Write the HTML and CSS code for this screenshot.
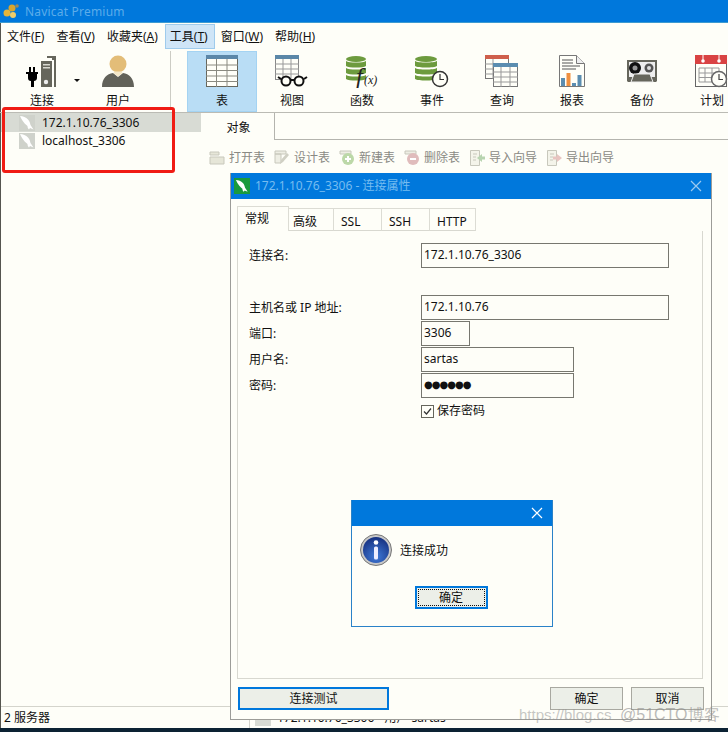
FILE: index.html
```html
<!DOCTYPE html>
<html lang="zh">
<head>
<meta charset="utf-8">
<title>Navicat Premium</title>
<link rel="stylesheet" href="styles.css">
</head>
<body>
<svg class="defs" width="0" height="0">
  <symbol id="dolphin" viewBox="0 0 16 16"><path d="M1 1c3 .2 6 1.300 8 3.500 1.500 1.600 2 3.500 2.500 5.500l3 4.500-3.500-1.500-1 1.500c-1-1-1.500-2-1.500-3.500C6.500 9.500 3.500 6.500 1 1z"/></symbol>
</svg>
<div class="app">
  <header class="titlebar">
    <svg class="app-logo" width="16" height="16" viewBox="0 0 16 16"><circle cx="4" cy="10" r="3.500" fill="#e3b43a"/><circle cx="9" cy="5" r="3.500" fill="#d8a52e"/><circle cx="10" cy="12" r="3" fill="#f0cd6a"/><circle cx="14" cy="3" r="1.800" fill="#9a8a5a"/></svg>
    <span class="app-title">Navicat Premium</span>
  </header>
  <nav class="menubar">
    <span class="menu">文件(<u>F</u>)</span>
    <span class="menu">查看(<u>V</u>)</span>
    <span class="menu">收藏夹(<u>A</u>)</span>
    <span class="menu menu-active">工具(<u>T</u>)</span>
    <span class="menu">窗口(<u>W</u>)</span>
    <span class="menu">帮助(<u>H</u>)</span>
  </nav>
  <section class="toolbar">
    <div class="tool-left">
      <div class="tool tool-conn">
        <svg width="34" height="33" viewBox="0 0 34 33">
          <path d="M16 6h11v26H16z" fill="#66665c"/><path d="M27 3h4v29h-2V5h-2z" fill="#66665c"/><path d="M22 1h9v2h-9z" fill="#66665c"/>
          <path d="M18 9h7v1.500h-7zM18 12h7v1.500h-7z" fill="#d8d8d0"/><circle cx="21" cy="27" r="2.200" fill="#eee"/>
          <path d="M4 12h2v5h2v-5h2v5h3v2h-1v4c0 2-1.500 3-3 3v6H6v-6c-2 0-3-1-3-3v-4H1v-2h3z" fill="#000"/>
        </svg>
        <span>连接</span>
        <i class="caret"></i>
      </div>
      <div class="tool tool-user">
        <svg width="34" height="33" viewBox="0 0 34 33">
          <circle cx="17" cy="9" r="8.500" fill="#e3bd78"/>
          <path d="M1 32c0-9 5-13 11-14l5 4 5-4c6 1 11 5 11 14z" fill="#62625a"/>
          <path d="M12.500 18l4.500 3.500 4.500-3.500-1-1.500h-7z" fill="#f4e7c8"/>
        </svg>
        <span>用户</span>
      </div>
    </div>
    <div class="tool-sep"></div>
    <div class="tool tool-on">
      <svg width="32" height="33" viewBox="0 0 32 33"><rect x=".5" y=".5" width="31" height="31" fill="#fffff8" stroke="#66665c"/><rect width="32" height="4" fill="#5b87a8"/><path d="M0 10h32M0 15.500h32M0 21h32M0 26.500h32M10.500 4v28M21 4v28" stroke="#8a8a80"/></svg>
      <span>表</span>
    </div>
    <div class="tool">
      <svg width="34" height="33" viewBox="0 0 34 33"><rect x=".5" y=".5" width="23" height="24" fill="#fffff8" stroke="#888"/><rect width="24" height="4" fill="#5b87a8"/><path d="M0 9h24M0 14h24M0 19h24M8 4v20M16 4v20" stroke="#999"/><circle cx="11" cy="26" r="4.500" fill="#fffff8" stroke="#111" stroke-width="2"/><circle cx="24" cy="26" r="4.500" fill="#fffff8" stroke="#111" stroke-width="2"/><path d="M15 25h5M6 24l-3-2M29 24l3-2" stroke="#111" stroke-width="2"/></svg>
      <span>视图</span>
    </div>
    <div class="tool">
      <svg width="34" height="33" viewBox="0 0 34 33"><ellipse cx="11" cy="4" rx="10" ry="3" fill="#6d9b3e"/><path d="M1 6c3 2 17 2 20 0v5c-3 2-17 2-20 0zM1 13c3 2 17 2 20 0v5c-3 2-17 2-20 0zM1 20c3 2 17 2 20 0v4c-3 2-17 2-20 0z" fill="#6d9b3e"/><text x="11" y="29" class="fx-f">f</text><text x="19" y="29" class="fx-x">(x)</text></svg>
      <span>函数</span>
    </div>
    <div class="tool">
      <svg width="34" height="33" viewBox="0 0 34 33"><ellipse cx="11" cy="4" rx="11" ry="3" fill="#6d9b3e"/><path d="M0 6c3 2 19 2 22 0v5c-3 2-19 2-22 0zM0 13c3 2 19 2 22 0v5c-3 2-19 2-22 0zM0 20c3 2 19 2 22 0v4c-3 2-19 2-22 0z" fill="#6d9b3e"/><circle cx="25" cy="24" r="7.500" fill="#fffff8" stroke="#333" stroke-width="1.500"/><path d="M25 19v5.500h4" fill="none" stroke="#333" stroke-width="1.200"/></svg>
      <span>事件</span>
    </div>
    <div class="tool">
      <svg width="34" height="33" viewBox="0 0 34 33"><rect x=".5" y=".5" width="23" height="23" fill="#fffff8" stroke="#777"/><rect width="24" height="4" fill="#cf5f4c"/><path d="M0 9h8M0 14h8M0 19h8M8 4v20" stroke="#999"/><rect x="8.500" y="8.500" width="24" height="23" fill="#fffff8" stroke="#777"/><rect x="8" y="8" width="25" height="4" fill="#5b8db0"/><path d="M8 17h25M8 22h25M8 27h25M16 12v20M25 12v20" stroke="#999"/></svg>
      <span>查询</span>
    </div>
    <div class="tool">
      <svg width="26" height="33" viewBox="0 0 26 33"><path d="M.5.5h17l8 8v23H.5z" fill="#fffff8" stroke="#777"/><path d="M17.500.5v8h8" fill="#eee" stroke="#777"/><path d="M3 5h11M3 8h11M3 11h18M3 14h14" stroke="#555"/><rect x="2" y="23" width="4" height="8" fill="#5b8db0"/><rect x="7.500" y="18" width="4" height="13" fill="#ef8f3e"/><rect x="13" y="28" width="4" height="3" fill="#5b8db0"/><rect x="18.500" y="20" width="4" height="11" fill="#5b8db0"/></svg>
      <span>报表</span>
    </div>
    <div class="tool">
      <svg width="32" height="33" viewBox="0 0 32 33"><path d="M1 5h30v21l-1 1H2l-1-1z" fill="#66665c"/><path d="M3 7h26v15H3z" fill="#eee"/><circle cx="9" cy="13" r="6" fill="#111"/><circle cx="9" cy="13" r="2.500" fill="#999"/><circle cx="23" cy="13" r="4.500" fill="#555"/><circle cx="23" cy="13" r="2" fill="#ddd"/><path d="M8 19h16l3 8H5z" fill="#66665c" stroke="#eee"/></svg>
      <span>备份</span>
    </div>
    <div class="tool">
      <svg width="34" height="33" viewBox="0 0 34 33"><rect x=".5" y=".5" width="31" height="31" fill="#fffff8" stroke="#666"/><rect width="32" height="9" fill="#d94343"/><circle cx="8" cy="6" r="1.800" fill="#fff"/><circle cx="24" cy="6" r="1.800" fill="#fff"/><path d="M8 0v6M24 0v6" stroke="#fff"/><path d="M4 13h20v14H4zM4 18h20M4 22.500h20M10 13v14M17 13v14" fill="none" stroke="#999"/><circle cx="24" cy="24" r="7.500" fill="#fffff8" stroke="#666" stroke-width="1.500"/><path d="M24 19v5.500h4" fill="none" stroke="#444" stroke-width="1.200"/></svg>
      <span>计划</span>
    </div>
  </section>
  <div class="workspace">
    <aside class="sidebar">
      <div class="server server-on"><svg class="srv-icon" width="16" height="16"><use href="#dolphin"/></svg><span>172.1.10.76_3306</span></div>
      <div class="server server-next"><svg class="srv-icon" width="16" height="16"><use href="#dolphin"/></svg><span>localhost_3306</span></div>
    </aside>
    <main class="content">
      <div class="tabstrip"><div class="obj-tab">对象</div><div class="tabfill"></div></div>
      <div class="objbar">
        <span class="objbtn"><svg width="16" height="16" viewBox="0 0 16 16"><path d="M1 2h9v3H1zM1 7h14v7H1z" fill="#e6e6d8" stroke="#c8c8bc"/></svg>打开表</span>
        <span class="objbtn"><svg width="16" height="16" viewBox="0 0 16 16"><path d="M1 1h11v3H1zM1 4h6v9H1z" fill="#eeeee4" stroke="#c8c8bc"/><path d="M6 14l1-4 6-7 2 2-6 7z" fill="#d0d0c4"/></svg>设计表</span>
        <span class="objbtn"><svg width="16" height="16" viewBox="0 0 16 16"><path d="M1 1h11v3H1z" fill="#eeeee4" stroke="#c8c8bc"/><circle cx="9" cy="9" r="6" fill="#bcd8a8"/><path d="M9 6v6M6 9h6" stroke="#fff" stroke-width="2"/></svg>新建表</span>
        <span class="objbtn"><svg width="16" height="16" viewBox="0 0 16 16"><path d="M1 1h11v3H1z" fill="#eeeee4" stroke="#c8c8bc"/><circle cx="9" cy="9" r="6" fill="#e0bcbc"/><path d="M6 9h6" stroke="#fff" stroke-width="2"/></svg>删除表</span>
        <span class="objbtn"><svg width="16" height="16" viewBox="0 0 16 16"><path d="M1.500.5h9v15h-9z" fill="#f4f4ea" stroke="#c8c8bc"/><path d="M4 4h4M4 7h3M4 10h3" stroke="#c8c8bc"/><path d="M8 8l5-4v2.500h3v3h-3V12z" fill="#b8d4b0"/></svg>导入向导</span>
        <span class="objbtn"><svg width="16" height="16" viewBox="0 0 16 16"><path d="M1.500.5h9v15h-9z" fill="#f4f4ea" stroke="#c8c8bc"/><path d="M4 4h4M4 7h3M4 10h3" stroke="#c8c8bc"/><path d="M16 8l-5-4v2.500H7v3h4V12z" fill="#e8c4c0"/></svg>导出向导</span>
      </div>
    </main>
  </div>
  <footer class="statusbar">
    <span class="status-left">2 服务器</span>
    <span class="status-right"><i class="status-icon"></i><span>172.1.10.76_3306 - 用户 sartas</span></span>
  </footer>
  <div class="taskbar"></div>

  <div class="dialog dlg-conn">
    <div class="dlg-title">
      <span class="dlg-logo"><svg width="14" height="14"><use href="#dolphin"/></svg></span>
      <span class="dlg-caption">172.1.10.76_3306 - 连接属性</span>
      <svg class="dlg-x" width="12" height="12" viewBox="0 0 12 12"><path d="M1 1l10 10M11 1L1 11" stroke="#9cc9ef" stroke-width="1.200"/></svg>
    </div>
    <div class="dlg-body">
      <div class="tabs">
        <span class="tab tab-on">常规</span>
        <span class="tab tab-a">高级</span>
        <span class="tab tab-b">SSL</span>
        <span class="tab tab-b">SSH</span>
        <span class="tab tab-c">HTTP</span>
      </div>
      <div class="panel">
        <div class="row row-first"><label>连接名:</label><div class="field f-wide">172.1.10.76_3306</div></div>
        <div class="row row-host"><label>主机名或 IP 地址:</label><div class="field f-wide">172.1.10.76</div></div>
        <div class="row"><label>端口:</label><div class="field f-port">3306</div></div>
        <div class="row"><label>用户名:</label><div class="field f-mid">sartas</div></div>
        <div class="row"><label>密码:</label><div class="field f-mid f-pass">●●●●●●</div></div>
        <div class="row row-check"><label></label><span class="check"><svg width="13" height="13" viewBox="0 0 13 13"><rect x=".5" y=".5" width="12" height="12" fill="#fffff8" stroke="#66665c"/><path d="M3 6.500l2.500 2.500L10 3.500" fill="none" stroke="#333" stroke-width="1.200"/></svg>保存密码</span></div>
      </div>
      <div class="dlg-actions">
        <button class="btn btn-focus btn-test">连接测试</button>
        <span class="spacer"></span>
        <button class="btn">确定</button>
        <button class="btn">取消</button>
      </div>
    </div>
  </div>

  <div class="dialog dlg-msg">
    <div class="dlg-title msg-title">
      <svg class="dlg-x" width="12" height="12" viewBox="0 0 12 12"><path d="M1 1l10 10M11 1L1 11" stroke="#fff" stroke-width="1.200"/></svg>
    </div>
    <div class="msg-body">
      <div class="msg-line">
        <svg width="32" height="32" viewBox="0 0 32 32">
          <defs><radialGradient id="orb" cx=".5" cy=".75" r=".75"><stop offset="0" stop-color="#3f7ad8"/><stop offset="1" stop-color="#16307f"/></radialGradient></defs>
          <circle cx="16" cy="16" r="15.500" fill="#c8c8c8" stroke="#777"/><circle cx="16" cy="16" r="13" fill="url(#orb)"/>
          <circle cx="16" cy="8.500" r="2.300" fill="#fff"/><rect x="14" y="12.500" width="4" height="13" rx="1.500" fill="#eef"/>
        </svg>
        <span class="msg-text">连接成功</span>
      </div>
      <button class="btn btn-focus btn-dotted"><span>确定</span></button>
    </div>
  </div>

  <div class="redbox"></div>
  <div class="watermark"><span>https://blog.cs</span><span class="wm-over">@51CTO博客</span></div>
</div>
</body>
</html>
```

FILE: styles.css
```css
* { box-sizing: border-box; }
html, body { margin: 0; padding: 0; }
body { width: 728px; height: 732px; overflow: hidden; background: #fefef8; }
.defs { position: absolute; }
.app {
  position: relative; width: 728px; height: 732px; overflow: hidden;
  display: flex; flex-direction: column;
  background: #fefef8; box-shadow: inset 1px 0 0 #55554f;
  font: 12px/16px "Noto Sans", "Noto Sans CJK SC", sans-serif; color: #111;
}
.titlebar { height: 23px; flex: none; background: #0078dc; border-bottom: 1px solid #3d9ad0; display: flex; align-items: center; padding-left: 3px; gap: 6px; }
.app-title { color: #5cacea; font-size: 12px; letter-spacing: .2px; padding-top: 2px; }
.menubar { height: 27px; flex: none; display: flex; padding: 1px 0 0 1px; }
.menu { height: 25px; padding: 5px 6px 0; }
.menu-active { margin-left: 1px; padding: 4px 6px 0 4px; background: #cfe5f7; border: 1px solid #9fcbec; }
.menu u { text-decoration: underline; }
.toolbar { height: 63px; flex: none; display: flex; overflow: hidden; border-bottom: 1px solid #bbbbb4; }
.tool-left { display: flex; width: 170px; flex: none; padding-left: 8px; }
.tool-sep { width: 1px; height: 58px; margin: 1px 16px 0 0; background: #ccccc4; flex: none; }
.tool { position: relative; width: 70px; flex: none; height: 62px; display: flex; flex-direction: column; align-items: center; padding-top: 5px; }
.tool svg { flex: none; height: 33px; }
.tool span { margin-top: 5px; }
.tool-conn { width: 68px; }
.tool-user { width: 84px; }
.tool-on { background: #b9ddf5; border: 1px solid #a4d3f2; padding-top: 3px; margin-top: 1px; height: 61px; }
.caret { position: absolute; left: 66px; top: 29px; border: 3px solid transparent; border-top: 3px solid #111; }
.fx-f { font: italic 24px "Liberation Serif", serif; fill: #222; }
.fx-x { font: italic 12px "Liberation Serif", serif; fill: #222; }
.workspace { flex: 1; min-height: 0; display: flex; }
.sidebar { width: 201px; flex: none; }
.server { height: 19px; display: flex; align-items: center; gap: 7px; padding-left: 19px; }
.server-on { background: #d8dbd4; margin-left: 1px; padding-left: 18px; }
.server-next { height: 18px; }
.srv-icon { background: #cfd2cb; fill: #fff; }
.content { flex: 1; min-width: 0; display: flex; flex-direction: column; }
.tabstrip { height: 27px; flex: none; display: flex; }
.obj-tab { width: 74px; height: 27px; padding: 7px 0 0 2px; text-align: center; border-right: 1px solid #b4b4ae; }
.tabfill { flex: 1; border-bottom: 1px solid #b4b4ae; }
.objbar { height: 30px; flex: none; display: flex; gap: 9px; padding: 9px 0 0 8px; }
.objbtn { display: flex; align-items: center; gap: 4px; height: 18px; color: #8a8a84; }
.statusbar { height: 22px; flex: none; display: flex; border-top: 1px solid #d4d4cc; margin-left: 1px; }
.status-left { width: 249px; flex: none; padding: 3px 0 0 3px; border-right: 1px solid #d4d4cc; }
.status-right { display: flex; align-items: flex-start; gap: 6px; padding: 3px 0 0 5px; }
.status-icon { width: 16px; height: 16px; background: #d8dbd4; flex: none; }
.taskbar { height: 4px; flex: none; background: #0c2233; }

.dialog { position: absolute; display: flex; flex-direction: column; background: #fefef8; }
.dlg-conn { left: 230px; top: 173px; width: 482px; height: 547px; border: 1px solid #9c9c98; border-top: 0; }
.dlg-title { height: 26px; flex: none; background: #0078dc; display: flex; align-items: center; padding: 0 9px 0 3px; gap: 5px; position: relative; }
.dlg-logo { width: 16px; height: 16px; background: #1a9a3c; display: flex; align-items: center; justify-content: center; fill: #fff; }
.dlg-caption { color: #76bcf0; font-size: 12px; flex: 1; }
.dlg-x { flex: none; margin-left: auto; }
.dlg-body { flex: 1; display: flex; flex-direction: column; padding: 8px 8px 9px 6px; }
.tabs { height: 24px; display: flex; align-items: flex-end; flex: none; position: relative; z-index: 1; }
.tab { height: 23px; padding: 5px 0 0 7px; border: 1px solid #dcdcd4; border-left: 0; border-bottom: 1px solid #d8d8d0; }
.tab-on { width: 52px; height: 25px; padding: 4px 0 0 7px; border-left: 1px solid #dcdcd4; border-bottom: 0; }
.tab-a { width: 45px; padding-left: 4px; }
.tab-b { width: 48px; }
.tab-c { width: 46px; }
.panel { flex: 1; margin-top: 0; border: 1px solid #d8d8d0; border-top: 0; padding: 12px 0 0 11px; display: flex; flex-direction: column; gap: 1px; }
.row { display: flex; align-items: center; height: 25px; }
.row label { width: 172px; flex: none; }
.row-first { margin-bottom: 26px; }
.field { height: 25px; border: 1px solid #77776f; padding: 1px 0 0 2px; line-height: 20px; }
.f-wide { width: 248px; }
.f-port { width: 49px; }
.f-mid { width: 153px; }
.f-pass { font: 10px/20px "DejaVu Sans", sans-serif; letter-spacing: -1px; }
.row-check { height: 18px; margin-top: 3px; }
.check { display: flex; align-items: center; gap: 3px; }
.dlg-actions { height: 23px; flex: none; margin: 8px -1px 0 0; display: flex; gap: 8px; padding-left: 1px; }
.spacer { flex: 1; }
.btn { width: 73px; height: 23px; padding: 0; background: #ecefe8; border: 1px solid #a8a8a0; font: inherit; color: #111; }
.btn-focus { border: 2px solid #0078dc; }
.btn-test { width: 151px; }
.dlg-msg { left: 351px; top: 500px; width: 202px; height: 127px; border: 1px solid #2a82c8; border-top: 0; }
.msg-title { justify-content: flex-end; padding-right: 9px; }
.msg-body { flex: 1; display: flex; flex-direction: column; align-items: center; padding: 8px 2px 0 0; }
.msg-line { align-self: flex-start; display: flex; align-items: center; gap: 8px; padding-left: 8px; height: 32px; }
.msg-text { padding-top: 2px; }
.btn-dotted { margin-top: 20px; padding: 1px; }
.btn-dotted span { display: block; height: 17px; border: 1px dotted #111; line-height: 15px; }
.redbox { position: absolute; left: 2px; top: 107px; width: 173px; height: 66px; border: 3px solid #f01c14; border-radius: 3px; }
.watermark { position: absolute; left: 519px; top: 704px; width: 209px; height: 22px; font: 15px/22px "Liberation Sans", sans-serif; color: rgba(150,150,150,.55); white-space: nowrap; overflow: hidden; }
.wm-over { position: absolute; left: 101px; top: 0; font-size: 16px; color: rgba(140,140,140,.6); }
```
